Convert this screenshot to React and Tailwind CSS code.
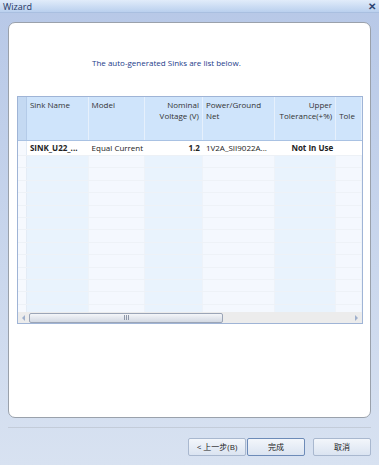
import React from "react";

const cols = [
  { w: "w-[62px]", body: "bg-[#e9f3fd]" },
  { w: "w-[57px]", body: "bg-[#f4f8fe]" },
  { w: "w-[58px]", body: "bg-[#e9f3fd]" },
  { w: "w-[72px]", body: "bg-[#f4f8fe]" },
  { w: "w-[62px]", body: "bg-[#e9f3fd]" },
  { w: "w-[26px]", body: "bg-[#f4f8fe]" },
];

const headers = [
  { lines: ["Sink Name"], align: "text-left" },
  { lines: ["Model"], align: "text-left" },
  { lines: ["Nominal", "Voltage (V)"], align: "text-right" },
  { lines: ["Power/Ground", "Net"], align: "text-left" },
  { lines: ["Upper", "Tolerance(+%)"], align: "text-right" },
  { lines: ["", "Tole"], align: "text-left" },
];

const firstRow = [
  { t: "SINK_U22_...", cls: "font-bold text-left" },
  { t: "Equal Current", cls: "text-left" },
  { t: "1.2", cls: "font-bold text-right" },
  { t: "1V2A_SII9022A...", cls: "text-left" },
  { t: "Not In Use", cls: "font-bold text-right" },
  { t: "", cls: "" },
];

function Grid() {
  const empty = Array.from({ length: 13 });
  return (
    <div className="w-[346px] h-[228px] border border-[#9fb4d6] flex flex-col bg-white">
      <div className="flex h-[44px] border-b border-[#a9c2e3] bg-[#cfe4fb]">
        <div className="w-[9px] bg-[#c4d9f2] border-r border-[#b4cbe8]" />
        {headers.map((h, i) => (
          <div
            key={i}
            className={`${cols[i].w} px-[3px] pt-[2px] border-r border-[#e6f0fc] text-[8px] leading-[11px] text-[#333] ${h.align} whitespace-nowrap overflow-hidden`}
          >
            {h.lines.map((l, j) => (
              <div key={j} className="h-[11px]">{l}</div>
            ))}
          </div>
        ))}
      </div>
      <div className="flex-1 overflow-hidden">
        <div className="flex h-[15px] border-b border-[#edf1f6]">
          <div className="w-[9px] bg-[#f6f9fe] border-r border-[#e4ecf6]" />
          {firstRow.map((c, i) => (
            <div
              key={i}
              className={`${cols[i].w} bg-white px-[3px] text-[8px] leading-[14px] text-[#222] whitespace-nowrap overflow-hidden ${c.cls}`}
            >
              {c.t}
            </div>
          ))}
        </div>
        {empty.map((_, r) => (
          <div key={r} className="flex h-[12.4px] border-b border-[#eef2f7]">
            <div className="w-[9px] bg-[#f6f9fe] border-r border-[#e4ecf6]" />
            {cols.map((c, i) => (
              <div key={i} className={`${c.w} ${c.body} border-r border-[#eef3f9]`} />
            ))}
          </div>
        ))}
      </div>
      <div className="h-[11px] bg-[#ececec] flex items-center relative">
        <div className="w-[11px] flex justify-center">
          <div className="w-0 h-0 border-y-[3px] border-y-transparent border-r-[3px] border-r-[#9fb0cc]" />
        </div>
        <div className="w-[194px] h-[10px] rounded-[2px] border border-[#9ba5b7] bg-gradient-to-b from-[#f4f6f9] to-[#d3d9e3] flex items-center justify-center gap-[1px]">
          <div className="w-px h-[5px] bg-[#8d97a8]" />
          <div className="w-px h-[5px] bg-[#8d97a8]" />
          <div className="w-px h-[5px] bg-[#8d97a8]" />
        </div>
        <div className="flex-1" />
        <div className="w-[11px] flex justify-center">
          <div className="w-0 h-0 border-y-[3px] border-y-transparent border-l-[3px] border-l-[#9fb0cc]" />
        </div>
      </div>
    </div>
  );
}

function Btn({ children, primary }) {
  return (
    <button
      className={`w-[58px] h-[18px] rounded-[2px] border ${
        primary ? "border-[#6d8bb8]" : "border-[#a9b8cf]"
      } bg-gradient-to-b from-[#f3f6fb] to-[#dbe4f1] text-[8px] text-[#222] flex items-center justify-center`}
    >
      {children}
    </button>
  );
}

export default function App() {
  return (
    <div
      className="w-[379px] h-[465px] flex flex-col bg-gradient-to-b from-[#b7c8e7] to-[#d8e2f1] overflow-hidden"
      style={{ fontFamily: '"Open Sans", "Noto Sans CJK SC", sans-serif' }}
    >
      <div className="h-[13px] flex items-center justify-between px-[3px] bg-gradient-to-b from-[#e1ecfa] to-[#bad0ee] border-b border-[#a9bfe0]">
        <span className="text-[9px] leading-none text-[#1d3563]">Wizard</span>
        <span className="text-[10px] leading-none font-bold text-[#2d4470]">✕</span>
      </div>
      <div className="px-[8px] pt-[9px]">
        <div className="h-[396px] rounded-[7px] border border-[#9aa1ab] bg-white flex flex-col">
          <p className="mt-[34px] ml-[83px] text-[8px] leading-[11px] text-[#233c8a]">
            The auto-generated Sinks are list below.
          </p>
          <div className="mt-[28px] ml-[8px]">
            <Grid />
          </div>
        </div>
      </div>
      <div className="mx-[8px] mt-[9px] h-[2px] border-t border-[#c3ccd9] border-b-white" />
      <div className="flex justify-end pr-[8px] mt-[9px]">
        <Btn>&lt; 上一步(B)</Btn>
        <div className="w-[1px]" />
        <Btn primary>完成</Btn>
        <div className="w-[8px]" />
        <Btn>取消</Btn>
      </div>
    </div>
  );
}
